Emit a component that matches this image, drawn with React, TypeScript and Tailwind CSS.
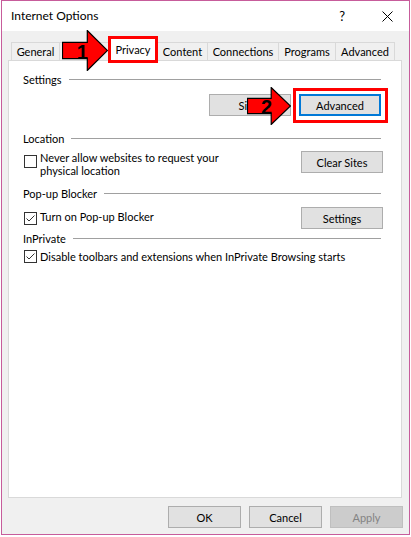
import React from "react";

type Tab = { label: string; w: string; selected?: boolean };

const tabs: Tab[] = [
  { label: "General", w: "w-[49px]" },
  { label: "", w: "w-[50px]" }, // Security tab, hidden under arrow 1
  { label: "Privacy", w: "w-[50px]", selected: true },
  { label: "Content", w: "w-[51px]" },
  { label: "Connections", w: "w-[72px]" },
  { label: "Programs", w: "w-[58px]" },
  { label: "Advanced", w: "w-[60px]" },
];

function WinButton({
  children,
  className = "",
  disabled = false,
  focused = false,
}: {
  children: React.ReactNode;
  className?: string;
  disabled?: boolean;
  focused?: boolean;
}) {
  const border = focused
    ? "border-2 border-[#0078d7]"
    : disabled
    ? "border border-[#bfbfbf]"
    : "border border-[#adadad]";
  return (
    <div
      className={`h-[22px] flex items-center justify-center ${border} ${
        disabled ? "bg-[#cccccc] text-[#838383]" : "bg-[#e1e1e1] text-black"
      } ${className}`}
    >
      {children}
    </div>
  );
}

function Checkbox({ checked = false, className = "" }: { checked?: boolean; className?: string }) {
  return (
    <div
      className={`w-[13px] h-[13px] shrink-0 border border-[#333333] bg-white flex items-center justify-center ${className}`}
    >
      {checked && (
        <svg width="11" height="11" viewBox="0 0 11 11">
          <path d="M1.5 5.5 L4 8 L9.5 2.5" fill="none" stroke="#333" strokeWidth="1" />
        </svg>
      )}
    </div>
  );
}

function GroupLabel({ text, className = "" }: { text: string; className?: string }) {
  return (
    <div className={`h-[16px] flex items-center gap-[7px] mr-[2px] ${className}`}>
      <span>{text}</span>
      <div className="flex-1 h-px bg-[#a0a0a0]" />
    </div>
  );
}

function Arrow({ label, className, w, h }: { label: string; className: string; w: number; h: number }) {
  const mid = h / 2;
  const body = h * 0.2;
  const headX = w * 0.55;
  return (
    <div className={`absolute ${className}`}>
      <svg width={w} height={h} viewBox={`0 0 ${w} ${h}`} className="absolute left-0 top-0">
        <path
          d={`M0.5 ${mid - body} H${headX} V0.5 L${w - 0.5} ${mid} L${headX} ${h - 0.5} V${mid + body} H0.5 Z`}
          fill="#ff0000"
          stroke="#000"
          strokeWidth="1.2"
        />
      </svg>
      <span
        className="absolute font-bold text-[20px] leading-none text-black font-['Liberation_Sans',Arial,sans-serif]"
        style={{ left: w * 0.32, top: mid - 9 }}
      >
        {label}
      </span>
    </div>
  );
}

export default function App() {
  return (
    <div className="relative w-[411px] h-[537px] bg-white text-[11px] text-black font-['Lato','Liberation_Sans',sans-serif] leading-none">
      <div className="ml-[1px] w-[409px] h-[535px] border border-[#c75c9b] flex flex-col bg-[#f0f0f0]">
        {/* title bar */}
        <div className="h-[30px] bg-white flex items-center pl-[9px] shrink-0">
          <span className="text-[12px]">Internet Options</span>
          <span className="ml-auto text-[13px] mr-[37px]">?</span>
          <svg width="11" height="11" viewBox="0 0 11 11" className="mr-[16px]">
            <path d="M0.5 0.5 L10.5 10.5 M10.5 0.5 L0.5 10.5" stroke="#000" strokeWidth="1" />
          </svg>
        </div>

        <div className="flex-1 flex flex-col pl-[6px] pr-[7px]">
          {/* tabs */}
          <div className="mt-[6px] h-[23px] flex items-end pl-[3px] relative z-10">
            {tabs.map((t, i) => (
              <div
                key={i}
                className={`${t.w} -ml-px first:ml-0 flex items-center justify-center border border-[#d9d9d9] ${
                  t.selected
                    ? "h-[24px] -mb-px border-b-0 bg-white relative z-10 pb-[1px]"
                    : "h-[18px] border-b-0 bg-[#f0f0f0]"
                }`}
              >
                {t.label}
              </div>
            ))}
          </div>

          {/* panel */}
          <div className="h-[438px] border border-[#d9d9d9] bg-white pl-[14px] pr-[18px] pt-[10px] flex flex-col">
            <GroupLabel text="Settings" />
            <div className="mt-[7px] flex justify-end gap-[8px] mr-[2px]">
              <WinButton className="w-[82px]">Sites</WinButton>
              <WinButton className="w-[82px]" focused>
                Advanced
              </WinButton>
            </div>

            <GroupLabel text="Location" className="mt-[14px]" />
            <div className="mt-[4px] flex items-start">
              <Checkbox className="ml-[1px] mt-[5px]" />
              <div className="ml-[3px] mt-[1px] leading-[13px]">
                <div>Never allow websites to request your</div>
                <div>physical location</div>
              </div>
              <WinButton className="w-[82px] ml-auto mt-[1px]">Clear Sites</WinButton>
            </div>

            <GroupLabel text="Pop-up Blocker" className="mt-[8px]" />
            <div className="mt-[6px] flex items-center">
              <Checkbox checked className="ml-[1px]" />
              <span className="ml-[3px] -mt-[3px]">Turn on Pop-up Blocker</span>
              <WinButton className="w-[82px] ml-auto">Settings</WinButton>
            </div>

            <GroupLabel text="InPrivate" className="mt-[1px]" />
            <div className="mt-[4px] flex items-center">
              <Checkbox checked className="ml-[1px]" />
              <span className="ml-[3px]">Disable toolbars and extensions when InPrivate Browsing starts</span>
            </div>
          </div>

          {/* dialog buttons */}
          <div className="mt-[8px] flex justify-end gap-[8px] mr-[-1px]">
            <WinButton className="w-[73px]">OK</WinButton>
            <WinButton className="w-[73px]">Cancel</WinButton>
            <WinButton className="w-[73px]" disabled>
              Apply
            </WinButton>
          </div>
        </div>
      </div>

      {/* annotations */}
      <div className="absolute left-[108px] top-[36px] w-[50px] h-[27px] border-[3px] border-[#ff0000] z-20" />
      <Arrow label="1" className="left-[62px] top-[30px] z-20" w={46} h={41} />
      <div className="absolute left-[293px] top-[88px] w-[95px] h-[35px] border-[3px] border-[#ff0000] z-20" />
      <Arrow label="2" className="left-[247px] top-[87px] z-20" w={44} h={38} />
    </div>
  );
}
